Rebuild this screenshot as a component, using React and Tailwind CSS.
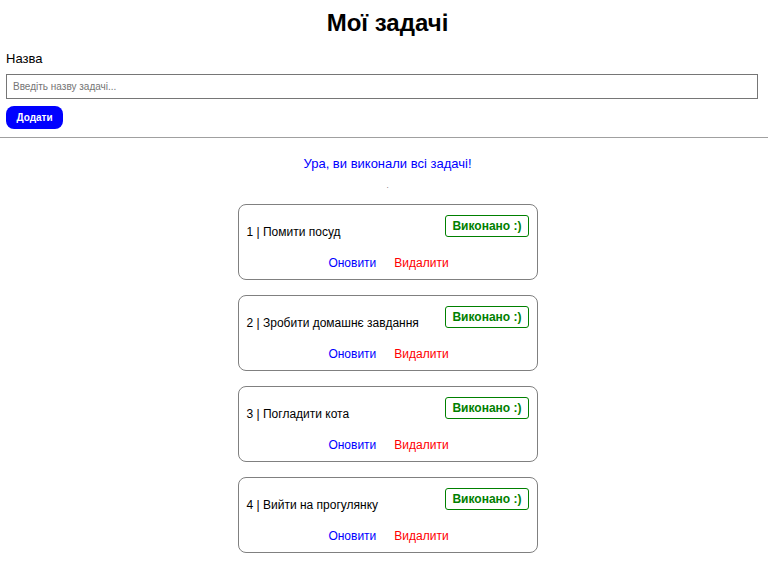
import React, { useState } from 'react';

const initialTasks = [
  { id: 1, title: 'Помити посуд' },
  { id: 2, title: 'Зробити домашнє завдання' },
  { id: 3, title: 'Погладити кота' },
  { id: 4, title: 'Вийти на прогулянку' },
];

const TaskCard = ({ task }) => (
  <div className="w-[300px] h-[76px] border border-[#808080] rounded-[8px] pl-[8px] pr-[8px] pt-[10px] flex flex-col">
    <div className="flex items-start justify-between">
      <span className="mt-[10px] text-[12px] leading-[14px] text-black">
        {task.id} | {task.title}
      </span>
      <button className="border border-[#008000] rounded-[3px] px-[6px] h-[22px] text-[12px] font-bold text-[#008000] bg-white">
        Виконано :)
      </button>
    </div>
    <div className="flex justify-center gap-[18px] mt-[17px] text-[12px] leading-[14px] pl-[2px]">
      <button className="text-[#0000ff]">Оновити</button>
      <button className="text-[#ff0000]">Видалити</button>
    </div>
  </div>
);

const App = () => {
  const [title, setTitle] = useState('');
  const [tasks] = useState(initialTasks);

  return (
    <div className="min-h-screen bg-white text-black font-['Liberation_Sans',Arial,sans-serif]">
      <h1 className="text-center text-[24px] font-bold pt-[9px] leading-[28px] pl-[7px]">Мої задачі</h1>
      <div className="px-[6px] pt-[14px]">
        <label className="block text-[13px] leading-[15px]">Назва</label>
        <input
          value={title}
          onChange={(e) => setTitle(e.target.value)}
          placeholder="Введіть назву задачі..."
          className="mt-[8px] block w-[752px] h-[25px] border border-[#767676] px-[6px] text-[10px] outline-none placeholder:text-[#757575]"
        />
        <button className="mt-[7px] h-[23px] w-[57px] rounded-[8px] bg-[#0000ff] text-white text-[10px] font-bold">
          Додати
        </button>
      </div>
      <hr className="mt-[8px] border-t border-[#a0a0a0]" />
      <p className="text-center text-[13px] leading-[15px] text-[#0000ff] mt-[18px] pl-[7px]">Ура, ви виконали всі задачі!</p>
      <p className="text-center text-[8px] text-[#606060] mt-[11px] leading-[8px] pl-[7px]">.</p>
      <div className="flex flex-col items-center gap-[15px] mt-[14px] pb-4 pl-[7px]">
        {tasks.map((t) => (
          <TaskCard key={t.id} task={t} />
        ))}
      </div>
    </div>
  );
};

export default App;
